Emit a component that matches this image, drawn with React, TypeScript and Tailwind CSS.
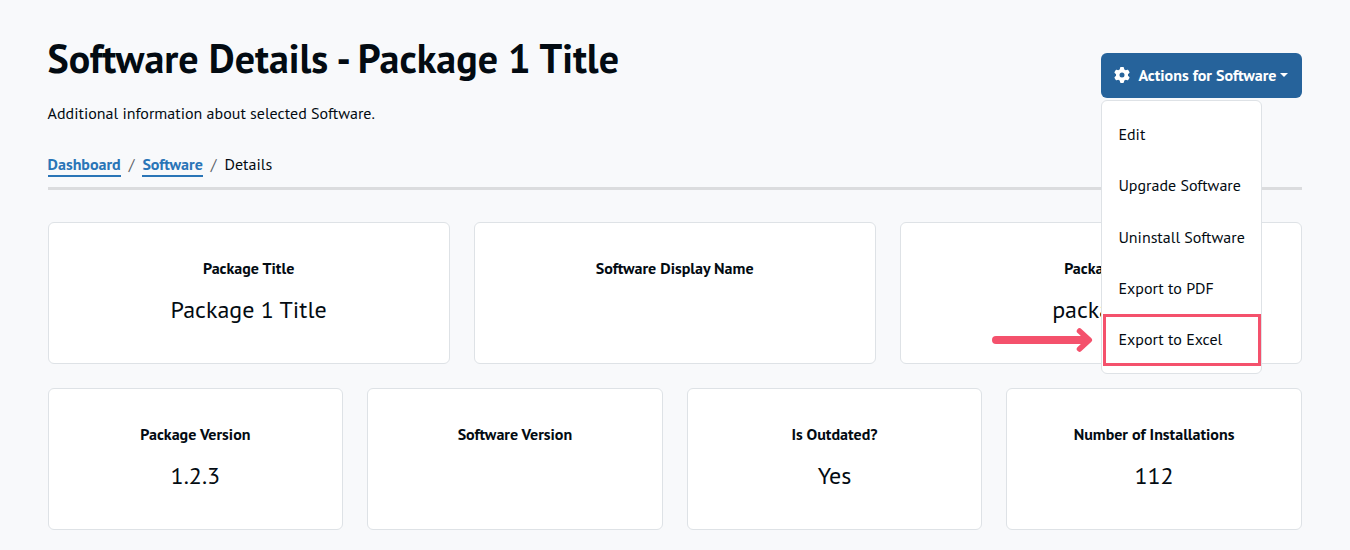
import React from 'react';
import { FaGear } from 'react-icons/fa6';

type CardProps = { title: React.ReactNode; value?: React.ReactNode };

function Card({ title, value }: CardProps) {
  return (
    <div className="flex h-[142px] flex-col items-center rounded-md border border-[#dee2e6] bg-white pt-8 whitespace-nowrap">
      <div className="leading-[26px] font-bold">{title}</div>
      <div className="mt-[10px] text-2xl leading-[38px]">{value}</div>
    </div>
  );
}

const menuItems = ['Edit', 'Upgrade Software', 'Uninstall Software', 'Export to PDF', 'Export to Excel'];

function ActionsMenu() {
  return (
    <div className="relative mt-[53px] w-[201px] shrink-0">
      <button className="flex h-[45px] w-full items-center rounded-md bg-[#26639b] pl-[13.6px] text-base font-bold whitespace-nowrap text-white">
        <FaGear className="mb-px h-4 w-4 shrink-0" />
        <span className="mb-[2px] ml-2 w-[138px] text-left">Actions for Software</span>
        <span className="mb-px ml-1 border-x-4 border-t-4 border-x-transparent border-t-white" />
      </button>
      <div className="absolute top-[47px] left-0 z-10 h-[274px] w-[161px] rounded-md border border-[#dee2e6] bg-white pt-[7.35px]">
        {menuItems.map((label) => (
          <div key={label} className="flex h-[51.3px] items-center pl-[16.6px] whitespace-nowrap">
            {label}
          </div>
        ))}
        <div className="absolute top-[213px] left-[1px] h-[52px] w-[158px] border-3 border-[#f4516c]" />
        <svg className="absolute top-[226px] -left-[110px]" width="102" height="28" viewBox="0 0 102 28" fill="none" stroke="#f4516c" strokeLinecap="round" strokeLinejoin="round">
          <path d="M4 13H94" strokeWidth="8" />
          <path d="M87.5 4L97.3 13L87.5 22" strokeWidth="5.5" />
        </svg>
      </div>
    </div>
  );
}

export default function App() {
  return (
    <div className="h-[550px] w-[1350px] overflow-hidden bg-[#f8f9fb] pr-[48.2px] pl-[47.6px] font-['PT_Sans','Noto_Sans',sans-serif] text-base text-[#030b12]">
      <header className="flex h-[190px] justify-between border-b-3 border-[#dbdcde]">
        <div className="whitespace-nowrap">
          <h1 className="mt-[34px] text-[40px] leading-[48px] font-bold">Software Details - Package 1 Title</h1>
          <p className="mt-[18px] leading-[26px]">Additional information about selected Software.</p>
          <nav className="mt-[25px] flex leading-[26px]">
            <a className="h-[26px] border-b-2 border-[#2a75b7] font-bold text-[#2a75b7]">Dashboard</a>
            <span className="px-2 text-[#5c6268]">/</span>
            <a className="h-[26px] border-b-2 border-[#2a75b7] font-bold text-[#2a75b7]">Software</a>
            <span className="px-2 text-[#5c6268]">/</span>
            <span>Details</span>
          </nav>
        </div>
        <ActionsMenu />
      </header>
      <main className="mt-8 grid gap-6">
        <section className="grid grid-cols-3 gap-6">
          <Card title="Package Title" value="Package 1 Title" />
          <Card title="Software Display Name" />
          <Card title="Package Id" value="package1" />
        </section>
        <section className="grid grid-cols-4 gap-6">
          <Card title="Package Version" value="1.2.3" />
          <Card title="Software Version" />
          <Card title="Is Outdated?" value="Yes" />
          <Card title="Number of Installations" value="112" />
        </section>
      </main>
    </div>
  );
}
